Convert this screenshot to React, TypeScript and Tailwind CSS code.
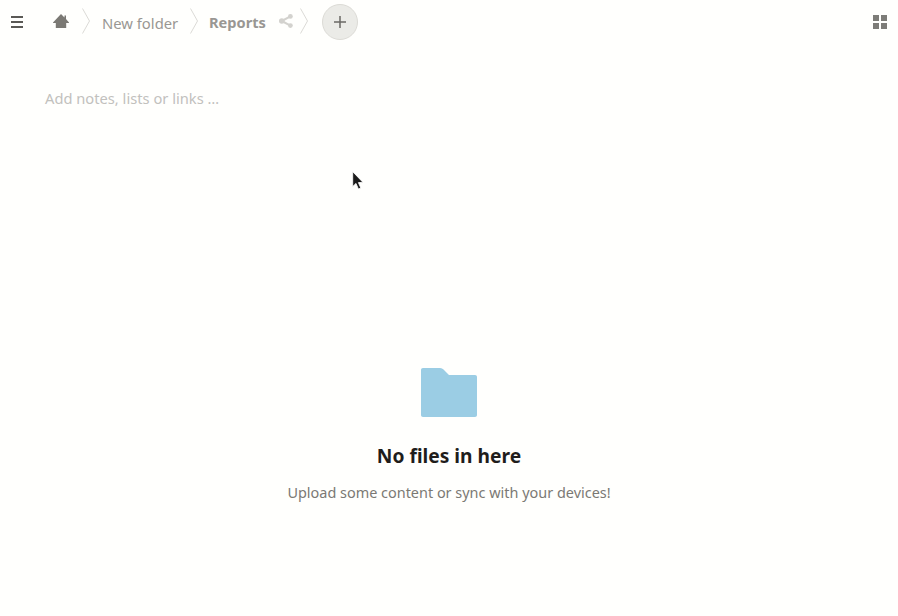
const font = { fontFamily: '"Noto Sans", "Open Sans", sans-serif' }

function Chevron() {
  return (
    <svg width="8" height="26" viewBox="0 0 8 26" fill="none" className="shrink-0">
      <path d="M0.5 0.5 L7.5 13 L0.5 25.5" stroke="#dbdad6" strokeWidth="1" />
    </svg>
  )
}

export default function App() {
  return (
    <div className="relative h-[616px] w-[898px] overflow-hidden bg-[#fffffd]" style={font}>
      {/* breadcrumb bar */}
      <div className="flex h-[44px] items-center">
        <div className="ml-[11px] flex h-[12px] w-[12px] flex-col justify-between">
          <div className="h-[2px] bg-[#5a5955]" />
          <div className="h-[2px] bg-[#5a5955]" />
          <div className="h-[2px] bg-[#5a5955]" />
        </div>
        <svg width="16" height="14" viewBox="0 0 16 14" className="ml-[30px] mb-[2px] shrink-0" fill="#7b7974">
          <path d="M8 0 L11.5 3.4 V1.5 H13 V4.9 L16 8.4 V9 H13.2 V14 H2.8 V9 H0 V8.4 Z" />
        </svg>
        <div className="ml-[13px] mb-[2px]"><Chevron /></div>
        <span className="ml-[12px] mt-[2px] w-[76px] whitespace-nowrap text-[14.8px] text-[#999793]">New folder</span>
        <div className="ml-[12px] mb-[2px]"><Chevron /></div>
        <span className="ml-[11px] mt-[2px] w-[57px] whitespace-nowrap text-[14.6px] font-bold text-[#999793]">Reports</span>
        <svg width="14" height="14" viewBox="0 0 14 14" className="ml-[13px] mb-[3px] shrink-0" fill="#d3d2ce">
          <circle cx="2.8" cy="7" r="2.8" />
          <circle cx="11.4" cy="2.4" r="2.4" />
          <circle cx="11.4" cy="11.6" r="2.4" />
          <path d="M2.8 7 L11.4 2.4 M2.8 7 L11.4 11.6" stroke="#d3d2ce" strokeWidth="2" />
        </svg>
        <div className="ml-[7px] mb-[2px]"><Chevron /></div>
        <button className="ml-[14px] flex h-[36px] w-[36px] items-center justify-center rounded-full border border-[#dcdbd6] bg-[#ebebe7]">
          <svg width="12" height="12" viewBox="0 0 12 12" stroke="#6b6a65" strokeWidth="1.5">
            <path d="M6 0 V12 M0 6 H12" />
          </svg>
        </button>
        <div className="ml-auto mr-[11px] grid grid-cols-[6px_6px] grid-rows-[6px_6px] gap-[2px]">
          <div className="bg-[#7d7c78]" />
          <div className="bg-[#7d7c78]" />
          <div className="bg-[#7d7c78]" />
          <div className="bg-[#7d7c78]" />
        </div>
      </div>

      {/* description */}
      <p className="mt-[44px] pl-[45px] text-[14.7px] leading-5 text-[#c2c1bd]">Add notes, lists or links …</p>

      {/* empty state */}
      <div className="mt-[260px] flex flex-col items-center">
        <svg width="56" height="49" viewBox="0 0 56 49" fill="#9bcde4">
          <path d="M2 0 H19 C21 0 22 1 23 2 L28 7 H54 C55.2 7 56 7.8 56 9 V47 C56 48.2 55.2 49 54 49 H2 C0.8 49 0 48.2 0 47 V2 C0 0.8 0.8 0 2 0 Z" />
        </svg>
        <h2 className="mt-[25px] text-[19.2px] leading-7 font-bold text-[#1f1d1b]">No files in here</h2>
        <p className="mt-[13px] text-[14.45px] leading-5 text-[#7b7974]">Upload some content or sync with your devices!</p>
      </div>

      {/* mouse pointer */}
      <svg width="13" height="20" viewBox="0 0 13 20" className="absolute left-[352px] top-[171px]">
        <path d="M0.7 0.7 V15.5 L4 12.4 L6.4 18 L8.8 17 L6.4 11.6 L11 11.4 Z" fill="#1a1a1a" stroke="#ffffff" strokeWidth="0.8" />
      </svg>
    </div>
  )
}
